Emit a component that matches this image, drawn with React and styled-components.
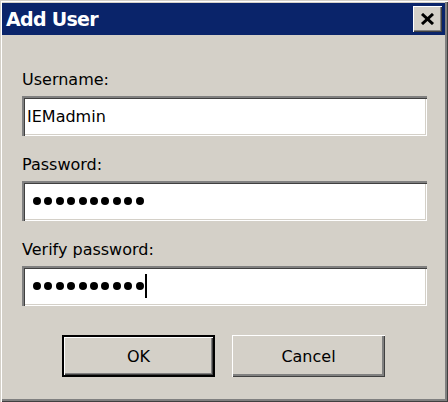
import styled, { createGlobalStyle } from 'styled-components';

const GlobalStyle = createGlobalStyle`
    html, body {
        margin: 0;
        padding: 0;
        background: #d4d0c8;
    }
    * {
        box-sizing: border-box;
    }
`;

function App() {
    return (
        <>
            <GlobalStyle />
            <Window>
                <TitleBar>
                    <Title>Add User</Title>
                    <CloseButton aria-label="Close">
                        <svg width="15" height="12" viewBox="0 0 15 12">
                            <path d="M2 1 L13 11 M13 1 L2 11" stroke="#000" strokeWidth="3" />
                        </svg>
                    </CloseButton>
                </TitleBar>

                <Body>
                    <Fields>
                        <Field>
                            <Label>Username:</Label>
                            <TextBox>IEMadmin</TextBox>
                        </Field>
                        <Field>
                            <Label>Password:</Label>
                            <TextBox $masked>
                                {Array.from({ length: 10 }).map((_, i) => (
                                    <Dot key={i} />
                                ))}
                            </TextBox>
                        </Field>
                        <Field>
                            <Label>Verify password:</Label>
                            <TextBox $masked>
                                {Array.from({ length: 10 }).map((_, i) => (
                                    <Dot key={i} />
                                ))}
                                <Caret />
                            </TextBox>
                        </Field>
                    </Fields>

                    <ButtonRow>
                        <Button $default>OK</Button>
                        <Button>Cancel</Button>
                    </ButtonRow>
                </Body>
            </Window>
        </>
    );
}

export default App;

const Window = styled.div`
    width: 448px;
    height: 402px;
    padding: 3px 3px 3px 2px;
    background: #d4d0c8;
    box-shadow: inset 1px 1px #d4d0c8, inset 2px 2px #ffffff, inset -1px -1px #404040,
        inset -3px -3px #808080;
    display: flex;
    flex-direction: column;
    font-family: 'DejaVu Sans', 'Liberation Sans', sans-serif;
`;

const TitleBar = styled.div`
    height: 32px;
    background: #0a246a;
    display: flex;
    align-items: center;
    justify-content: space-between;
    padding: 0 3px 0 4px;
`;

const Title = styled.span`
    color: #ffffff;
    font-weight: bold;
    font-size: 19px;
    letter-spacing: -0.7px;
`;

const CloseButton = styled.button`
    width: 29px;
    height: 26px;
    padding: 0;
    border: none;
    background: #d4d0c8;
    display: flex;
    align-items: center;
    justify-content: center;
    box-shadow: inset 1px 1px #ffffff, inset -1px -1px #404040, inset -2px -2px #808080;
`;

const Body = styled.div`
    padding-top: 35px;
    display: flex;
    flex-direction: column;
`;

const Fields = styled.div`
    padding: 0 18px 0 20px;
    display: flex;
    flex-direction: column;
    gap: 19px;
`;

const Field = styled.div`
    display: flex;
    flex-direction: column;
    gap: 7px;
`;

const Label = styled.label`
    font-size: 16px;
    line-height: 19px;
    color: #000000;
`;

const TextBox = styled.div`
    height: 40px;
    background: #ffffff;
    display: flex;
    align-items: center;
    gap: 3.4px;
    padding-left: ${(p) => (p.$masked ? '11px' : '5px')};
    font-size: 16px;
    color: #000000;
    box-shadow: inset 2px 2px #808080, inset 3px 3px #404040, inset -1px -1px #ffffff,
        inset -2px -2px #d4d0c8;
`;

const Dot = styled.span`
    width: 8px;
    height: 8px;
    border-radius: 50%;
    background: #000000;
`;

const Caret = styled.span`
    width: 2px;
    height: 24px;
    margin-left: -2px;
    background: #000000;
`;

const ButtonRow = styled.div`
    margin-top: 29px;
    display: flex;
    justify-content: center;
    gap: 17px;
`;

const Button = styled.button`
    width: 153px;
    height: 42px;
    border: none;
    padding: 0;
    background: #d4d0c8;
    font-family: 'DejaVu Sans', 'Liberation Sans', sans-serif;
    font-size: 16px;
    color: #000000;
    box-shadow: ${(p) =>
        p.$default
            ? 'inset 0 0 0 2px #000000, inset 3px 3px #ffffff, inset -3px -3px #404040, inset -4px -4px #808080'
            : 'inset 1px 1px #ffffff, inset -1px -1px #404040, inset -3px -3px #808080'};
`;
